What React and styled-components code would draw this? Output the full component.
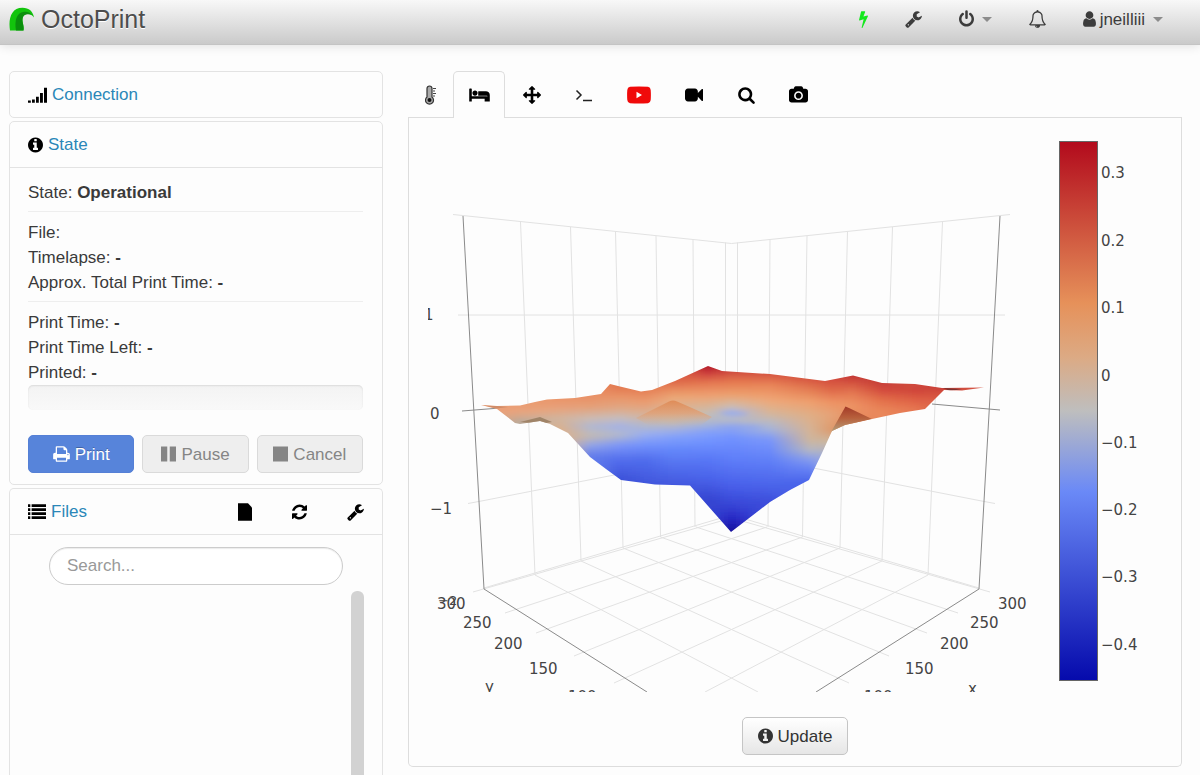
import React from "react";
import styled, { createGlobalStyle, css } from "styled-components";

const GlobalStyle = createGlobalStyle`
  *, *::before, *::after { box-sizing: border-box; }
  body {
    margin: 0;
    background: #fdfdfd;
    color: #3a3a3a;
    font-family: "Liberation Sans", Arial, sans-serif;
    font-size: 17px;
    line-height: 25px;
  }
  button, input { font: inherit; }
`;

/* ---------- icons ---------- */

const ICONS = {
  bolt: [448, 900, "M1333 566q18 20 7 44l-540 1157q-13 25-42 25-4 0-14-2-17-5-25.500-19t-4.500-30l197-808-406 101q-4 1-12 1-18 0-31-11-18-15-13-39l201-825q4-14 16-23t28-9h328q19 0 32 12.500t13 29.500q0 8-5 18l-171 463 396-98q8-2 12-2 19 0 34 15z"],
  wrench: [64, 1664, "M448 1472q0-26-19-45t-45-19-45 19-19 45 19 45 45 19 45-19 19-45zm644-420l-682 682q-37 37-90 37-52 0-91-37l-106-108q-38-36-38-90 0-53 38-91l681-681q39 98 114.5 173.500t173.500 114.500zm634-435q0 39-23 106-47 134-164.500 217.500t-258.500 83.500q-185 0-316.500-131.500t-131.500-316.500 131.500-316.500 316.500-131.500q58 0 121.500 16.500t107.500 46.500q16 11 16 28t-16 28l-293 169v224l193 107q5-3 79-48.500t135.500-81 70.500-35.500q15 0 23.500 10t8.500 25z"],
  power: [128, 1536, "M1664 896q0 156-61 298t-164 245-245 164-298 61-298-61-245-164-164-245-61-298q0-182 80.500-343t226.500-270q43-32 95.500-25t83.500 50q32 42 24.500 94.500t-49.500 84.500q-98 74-151.500 181t-53.500 228q0 104 40.500 198.500t109.500 163.500 163.500 109.500 198.500 40.500 198.500-40.500 163.500-109.500 109.500-163.500 40.500-198.500q0-121-53.500-228t-151.500-181q-42-32-49.500-84.500t24.500-94.500q31-43 84-50t95 25q146 109 226.500 270t80.500 343zm-640-768v640q0 52-38 90t-90 38-90-38-38-90v-640q0-52 38-90t90-38 90 38 38 90z"],
  bell: [64, 1664, "M912 1696q0-16-16-16-59 0-101.500-42.500t-42.500-101.500q0-16-16-16t-16 16q0 73 51.500 124.500t124.500 51.500q16 0 16-16zm-666-288h1300q-266-300-266-832 0-51-24-105t-69-103-121.500-80.500-169.500-31.500-169.500 31.500-121.500 80.500-69 103-24 105q0 532-266 832zm1482 0q0 52-38 90t-90 38h-448q0 106-75 181t-181 75-181-75-75-181h-448q-52 0-90-38t-38-90q50-42 91-88t85-119.500 74.500-158.500 50-206 19.500-260q0-152 117-282.500t307-158.500q-8-19-8-39 0-40 28-68t68-28 68 28 28 68q0 20-8 39 190 28 307 158.500t117 282.500q0 139 19.500 260t50 206 74.500 158.500 85 119.500 91 88z"],
  user: [256, 1280, "M1536 1399q0 109-62.500 187t-150.500 78h-854q-88 0-150.500-78t-62.500-187q0-85 8.500-160.500t31.500-152 58.500-131 94-89 134.500-34.500q131 128 313 128t313-128q76 0 134.500 34.500t94 89 58.500 131 31.500 152 8.500 160.500zm-256-887q0 159-112.500 271.500t-271.500 112.500-271.500-112.500-112.500-271.500 112.500-271.500 271.500-112.500 271.500 112.500 112.500 271.500z"],
  info: [128, 1536, "M1152 1376v-160q0-14-9-23t-23-9h-96v-512q0-14-9-23t-23-9h-320q-14 0-23 9t-9 23v160q0 14 9 23t23 9h96v320h-96q-14 0-23 9t-9 23v160q0 14 9 23t23 9h448q14 0 23-9t9-23zm-128-896v-160q0-14-9-23t-23-9h-192q-14 0-23 9t-9 23v160q0 14 9 23t23 9h192q14 0 23-9t9-23zm640 416q0 209-103 385.500t-279.500 279.500-385.500 103-385.500-103-279.500-279.500-103-385.500 103-385.500 279.500-279.500 385.500-103 385.500 103 279.500 279.500 103 385.500z"],
  print: [64, 1664, "M448 1536h896v-256h-896v256zm0-640h896v-384h-160q-40 0-68-28t-28-68v-160h-640v640zm1152 64q0-26-19-45t-45-19-45 19-19 45 19 45 45 19 45-19 19-45zm128 0v416q0 13-9.500 22.500t-22.500 9.500h-224v160q0 40-28 68t-68 28h-960q-40 0-68-28t-28-68v-160h-224q-13 0-22.500-9.500t-9.500-22.500v-416q0-79 56.500-135.500t135.500-56.500h64v-544q0-40 28-68t68-28h672q40 0 88 20t76 48l152 152q28 28 48 76t20 88v256h64q79 0 135.500 56.500t56.500 135.500z"],
  pause: [128, 1536, "M128 128h640v1536h-640zM1024 128h640v1536h-640z"],
  stop: [128, 1536, "M128 128h1536v1536h-1536z"],
  signal: [0, 1900, "M0 1440h280v230h-280zM400 1340h280v330h-280zM800 1080h280v590h-280zM1200 700h290v970h-290zM1600 160h300v1510h-300z"],
  list: [0, 1792, "M0 130h230v260h-230zM360 130h1432v260h-1432zM0 530h230v260h-230zM360 530h1432v260h-1432zM0 930h230v260h-230zM360 930h1432v260h-1432zM0 1330h230v260h-230zM360 1330h1432v260h-1432z"],
  file: [128, 1400, "M128 20h1000l400 430v1320h-1400z"],
  refresh: [128, 1536, "M1639 1056q0 5-1 7-64 268-268 434.500t-478 166.500q-146 0-282.500-55t-243.500-157l-129 129q-19 19-45 19t-45-19-19-45v-448q0-26 19-45t45-19h448q26 0 45 19t19 45-19 45l-137 137q71 66 161 102t187 36q134 0 250-65t186-179q11-17 53-117 8-23 30-23h192q13 0 22.500 9.500t9.500 22.500zm25-800v448q0 26-19 45t-45 19h-448q-26 0-45-19t-19-45 19-45l138-138q-148-137-349-137-134 0-250 65t-186 179q-11 17-53 117-8 23-30 23h-199q-13 0-22.500-9.500t-9.500-22.500v-7q65-268 270-434.500t480-166.500q146 0 284 55.500t245 156.500l130-129q19-19 45-19t45 19 19 45z"],
  bed: [0, 2048, "M256 1024h1472q26 0 45 19t19 45v448h-256v-256h-1280v256h-256v-1216q0-26 19-45t45-19h128q26 0 45 19t19 45v704zm576-320q0-106-75-181t-181-75-181 75-75 181 75 181 181 75 181-75 75-181zm1216 256v-64q0-159-112.500-271.500t-271.500-112.500h-704q-26 0-45 19t-19 45v384h1152zM1792 960h256v576h-256z"],
  arrows: [0, 1792, "M1792 896q0 26-19 45l-256 256q-19 19-45 19t-45-19-19-45v-128h-384v384h128q26 0 45 19t19 45-19 45l-256 256q-19 19-45 19t-45-19l-256-256q-19-19-19-45t19-45 45-19h128v-384h-384v128q0 26-19 45t-45 19-45-19l-256-256q-19-19-19-45t19-45l256-256q19-19 45-19t45 19 19 45v128h384v-384h-128q-26 0-45-19t-19-45 19-45l256-256q19-19 45-19t45 19l256 256q19 19 19 45t-19 45-45 19h-128v384h384v-128q0-26 19-45t45-19 45 19l256 256q19 19 19 45z"],
  video: [0, 1792, "M1792 352v1088q0 42-39 59-13 5-25 5-27 0-45-19l-403-403v166q0 119-84.500 203.500t-203.500 84.500h-704q-119 0-203.500-84.500t-84.500-203.500v-704q0-119 84.500-203.500t203.500-84.500h704q119 0 203.500 84.500t84.500 203.500v165l403-402q18-19 45-19 12 0 25 5 39 17 39 59z"],
  search: [64, 1664, "M1216 832q0-185-131.500-316.500t-316.500-131.500-316.500 131.500-131.500 316.500 131.500 316.500 316.500 131.500 316.500-131.500 131.500-316.500zm512 832q0 52-38 90t-90 38q-54 0-90-38l-343-342q-179 124-399 124-143 0-273.500-55.500t-225-150-150-225-55.500-273.500 55.500-273.500 150-225 225-150 273.500-55.500 273.500 55.500 225 150 150 225 55.500 273.500q0 220-124 399l343 343q37 37 37 90z"],
  camera: [0, 1920, "M960 672q119 0 203.500 84.500t84.500 203.500-84.500 203.500-203.500 84.500-203.500-84.500-84.500-203.500 84.500-203.500 203.500-84.500zm704-416q106 0 181 75t75 181v896q0 106-75 181t-181 75h-1408q-106 0-181-75t-75-181v-896q0-106 75-181t181-75h224l51-136q19-49 69.500-84.500t103.500-35.500h512q53 0 103.500 35.500t69.500 84.500l51 136h224zm-704 1152q185 0 316.500-131.500t131.500-316.500-131.500-316.500-316.500-131.500-316.500 131.500-131.500 316.500 131.500 316.500 316.500 131.500z"],
};

const IconSvg = styled.svg`
  display: block;
  flex: none;
  fill: currentColor;
`;

function Icon({ name }) {
  const [x, w, d] = ICONS[name];
  return (
    <IconSvg aria-hidden="true" viewBox={`${x} 0 ${w} 1792`} width={Math.round((w * 18) / 1792)} height="18">
      <path d={d} />
    </IconSvg>
  );
}

const Thermometer = () => (
  <IconSvg aria-hidden="true" viewBox="0 0 12 20" width="12" height="20">
    <path d="M2 3.500a2.500 2.500 0 0 1 5 0v8.500a4 4 0 1 1-5 0z" fill="#aaa" stroke="#333" strokeWidth="1.200" />
    <circle cx="4.500" cy="15" r="2" fill="#111" />
    <path d="M8 3.500h3M8 6h2M8 8.500h3M8 11h2" stroke="#444" strokeWidth="1.100" />
  </IconSvg>
);

const Terminal = () => (
  <IconSvg aria-hidden="true" viewBox="0 0 18 18" width="18" height="18">
    <path d="M1.500 4.500 6 9l-4.500 4.500M8 14.500h9" fill="none" stroke="#222" strokeWidth="1.500" />
  </IconSvg>
);

const Youtube = () => (
  <IconSvg aria-hidden="true" viewBox="0 0 24 18" width="24" height="18">
    <path d="M3 .8Q12 0 21 .8 23.500 1.200 23.700 4q.4 5 0 10-.2 2.800-2.700 3.200-9 .8-18 0Q.5 16.800.3 14-.1 9 .3 4 .5 1.200 3 .8z" fill="#f00a0a" />
    <path d="M9.500 5.800 15 9l-5.500 3.200z" fill="#fff" />
  </IconSvg>
);

const Logo = () => (
  <IconSvg aria-hidden="true" viewBox="0 0 26 24" width="26" height="24">
    <path d="M1 23.500C-.8 12 2 .8 13.500.8 20 .8 24 4.500 25 10.500 22 6 16 5 14 10c-1.800 4.500 1.500 8 .5 13.500z" fill="#12c40c" />
    <path d="M7 23.500C5.500 14 7 6 15 4.800c3-.4 6 .6 8.500 3.300-4-1.500-8-1.500-9.500 1.900-1.800 4.500 1.500 8 .5 13.500z" fill="#0a8f0c" />
  </IconSvg>
);

/* ---------- header ---------- */

const Header = styled.header`
  display: flex;
  align-items: center;
  justify-content: space-between;
  height: 45px;
  padding: 0 37px 6px 9px;
  background: linear-gradient(#f8f8f8, #cacaca);
  border-bottom: 1px solid #c4c4c4;
  box-shadow: 0 1px 10px rgba(0, 0, 0, 0.12);
`;

const Brand = styled.a`
  display: flex;
  align-items: center;
  gap: 6px;
  color: #4d4d4d;
  font-size: 25px;
  text-decoration: none;
  text-shadow: 0 1px 0 #fff;
`;

const Nav = styled.nav`
  display: flex;
  align-items: center;
  gap: 37px;
`;

const NavButton = styled.button`
  display: flex;
  align-items: center;
  gap: 4px;
  padding: 0;
  border: 0;
  background: none;
  color: ${(p) => p.$color || "#3c3c3c"};
`;

const Caret = styled.span`
  margin-left: 4px;
  border: 5px solid transparent;
  border-top-color: #8c8c8c;
  border-bottom: 0;
`;

/* ---------- layout ---------- */

const Page = styled.div`
  display: flex;
  flex-direction: column;
  min-height: 100vh;
`;

const Main = styled.main`
  flex: 1;
  display: grid;
  grid-template-columns: minmax(0, 374fr) minmax(0, 774fr);
  gap: 25px;
  padding: 26px 18px 0 9px;
`;

const Sidebar = styled.aside`
  display: flex;
  flex-direction: column;
  gap: 3px;
`;

const Panel = styled.section`
  border: 1px solid #e3e3e3;
  border-radius: 5px;
  ${(p) =>
    p.$grow &&
    css`
      flex: 1;
      display: flex;
      flex-direction: column;
      border-bottom: 0;
      border-radius: 5px 5px 0 0;
    `}
`;

const PanelHeading = styled.div`
  display: flex;
  align-items: center;
  gap: 5px;
  height: ${(p) => (p.$open ? 46 : 45)}px;
  padding: 0 18px;
  color: #000;
  border-bottom: ${(p) => (p.$open ? "1px solid #e3e3e3" : "0")};
`;

const PanelLink = styled.a`
  color: #2a87b8;
  text-decoration: none;
`;

const Tools = styled.div`
  display: flex;
  align-items: center;
  gap: 40px;
  margin-left: auto;
`;

const ToolButton = styled.button`
  padding: 0;
  border: 0;
  background: none;
  color: #000;
`;

const StateBody = styled.div`
  padding: 12px 19px 11px 18px;
`;

const Group = styled.div`
  & + & {
    margin-top: 6px;
    padding-top: 8px;
    border-top: 1px solid #eee;
  }
`;

const Progress = styled.div`
  height: 25px;
  margin-bottom: 25px;
  border-radius: 5px;
  background: linear-gradient(#f3f3f3, #f9f9f9);
  box-shadow: inset 0 1px 2px rgba(0, 0, 0, 0.1);
`;

const Actions = styled.div`
  display: grid;
  grid-template-columns: repeat(3, 1fr);
  gap: 8px;
`;

const Button = styled.button`
  display: inline-flex;
  align-items: center;
  justify-content: center;
  gap: 5px;
  height: 38px;
  padding: 0 15px;
  border: 1px solid #c5c5c5;
  border-radius: 5px;
  background: linear-gradient(#fff, #e6e6e6);
  color: #333;
  ${(p) =>
    p.$primary &&
    css`
      border-color: #5580d6;
      background: #5784da;
      color: #fff;
      text-shadow: 0 -1px 0 rgba(0, 0, 0, 0.25);
    `}
  &:disabled {
    border-color: #dadada;
    background: #eee;
    color: #858585;
  }
`;

const FilesBody = styled.div`
  flex: 1;
  display: flex;
  flex-direction: column;
  padding: 12px 18px 0 39px;
`;

const Search = styled.input`
  height: 38px;
  margin: 0 21px 6px 0;
  padding: 0 17px;
  border: 1px solid #ccc;
  border-radius: 19px;
  background: #fff;
  box-shadow: inset 0 1px 1px rgba(0, 0, 0, 0.08);
  &::placeholder { color: #999; opacity: 1; }
`;

const ScrollThumb = styled.div`
  flex: 1;
  align-self: flex-end;
  width: 13px;
  min-height: 60px;
  border-radius: 6px 6px 0 0;
  background: #d2d2d2;
`;

const Content = styled.div`
  display: flex;
  flex-direction: column;
  padding-bottom: 8px;
`;

const Tabs = styled.div`
  display: flex;
  height: 47px;
  box-shadow: inset 0 -1px 0 #ddd;
`;

const Tab = styled.button`
  display: flex;
  align-items: center;
  justify-content: center;
  width: ${(p) => p.$width}px;
  padding: 0;
  border: 1px solid transparent;
  border-bottom: 0;
  background: none;
  color: #000;
  ${(p) =>
    p.$active &&
    css`
      border-color: #ddd;
      border-radius: 5px 5px 0 0;
      background: #fdfdfd;
    `}
`;

const TabPane = styled.div`
  display: flex;
  flex-direction: column;
  align-items: center;
  padding-bottom: 11px;
  border: 1px solid #ddd;
  border-top: 0;
  border-radius: 0 0 5px 5px;
`;

const Chart = styled.svg`
  display: block;
  width: 100%;
  height: auto;
  margin-bottom: 25px;
  font-family: "DejaVu Sans", Verdana, sans-serif;
  font-size: 15px;
  fill: #444;
`;

/* ---------- bed mesh chart ---------- */

const OUTLINE =
  "M481 405 497 406 520 405.500 535 402 547 399.500 575 398 601 394 610 384 620 386.500 641 391.500 652 390 675 381 708 366 722 371 770 374 825 381 853 375.500 882 383 915 384 942 388 984 387.500 962 390.500 944 390 925 409 900 413 872 419 845 425 832 431 822 453 809 480 790 490 770 502 731 532 690 485.500 655 484.500 621 480 606 469 590 457 568 433 550 424 540 421 520 424 515 423 497 409z";

// Sampled surface colours: screen column, then [screen row, colour] pairs.
const COLUMNS = [
  [480, [[400, "eb9b72"], [412, "eba077"]]],
  [520, [[404, "ea9c70"], [412, "e9a57e"], [422, "b9ab9c"]]],
  [560, [[399, "ea9468"], [409, "e6a47e"], [419, "d0b5a0"], [430, "dbb08c"]]],
  [590, [[395, "e98f64"], [407, "e5a078"], [418, "cdbab0"], [427, "b0b7d2"], [436, "c5bab0"], [446, "8fa2e8"], [456, "617bea"]]],
  [620, [[386, "e2774e"], [397, "e99468"], [409, "dfaa88"], [418, "c6bcbd"], [427, "a3b2e6"], [435, "b3b9cc"], [445, "7c96f8"], [460, "526ded"], [480, "3b50d8"]]],
  [645, [[390, "e57f55"], [402, "ea9c70"], [414, "d8b196"], [424, "b8bac4"], [434, "9aaeef"], [445, "7392fc"], [460, "4f6cec"], [484, "4056dc"]]],
  [673, [[381, "dd6546"], [390, "e88d60"], [398, "eba878"], [406, "dfb08c"], [416, "cfb8a2"], [424, "bdb9bc"], [431, "9caee8"], [438, "7f9efc"], [450, "6487fa"], [466, "5370ee"], [485, "4257de"]]],
  [708, [[366, "b0152a"], [373, "cc3d3a"], [383, "e57851"], [396, "eea272"], [406, "d8b497"], [414, "c4bdb5"], [424, "a8b5d6"], [432, "83a0fb"], [442, "7092ff"], [458, "5a79f7"], [478, "4a63ea"], [500, "3444d0"]]],
  [732, [[370, "cc453c"], [382, "e5794f"], [395, "eda26f"], [405, "d2bba8"], [412, "a9b6e0"], [417, "b2b8d0"], [421, "b4b9c8"], [427, "8ea6f0"], [438, "7192ff"], [460, "5e7df8"], [485, "4960ea"], [505, "3745d6"], [520, "2523c0"], [532, "160c96"]]],
  [770, [[372, "d34d3d"], [385, "e98558"], [400, "efa777"], [413, "d6b699"], [423, "b6b9c6"], [430, "a2b1dc"], [440, "7996fb"], [460, "6080f8"], [485, "4b64ea"], [502, "3c4edb"]]],
  [810, [[378, "d5533e"], [390, "e47d53"], [402, "ee9f6e"], [415, "e0ae86"], [428, "d6b294"], [440, "cdb69e"], [450, "b4b6c2"], [460, "839af0"], [470, "6480f4"], [482, "4a65ea"]]],
  [832, [[378, "d2493c"], [390, "df6848"], [402, "ed9263"], [415, "e6a377"], [430, "dd9a6c"], [442, "cbb7a0"], [455, "a6afd0"]]],
  [853, [[374, "bf3033"], [382, "d2503e"], [392, "e37550"], [405, "ed9365"], [420, "e58a5c"]]],
  [882, [[382, "c53c36"], [390, "d34b3d"], [400, "e36f4a"], [412, "ea895c"], [420, "e78459"]]],
  [915, [[383, "d04c3d"], [390, "cf453a"], [400, "df6044"], [410, "e67852"]]],
  [942, [[386, "c53b37"], [392, "d34c3c"], [402, "dc6145"]]],
  [986, [[386, "d75b47"], [392, "d75b47"]]],
];

const rgb = (hex) => [0, 2, 4].map((i) => parseInt(hex.slice(i, i + 2), 16));
const mix = (a, b, t) => a.map((v, i) => v + (b[i] - v) * t);

function columnColor(stops, y) {
  if (y <= stops[0][0]) return rgb(stops[0][1]);
  for (let i = 1; i < stops.length; i++) {
    if (y <= stops[i][0]) {
      const [y0, c0] = stops[i - 1];
      const [y1, c1] = stops[i];
      return mix(rgb(c0), rgb(c1), (y - y0) / (y1 - y0));
    }
  }
  return rgb(stops[stops.length - 1][1]);
}

function surfaceCells() {
  const cells = [];
  const size = 4;
  for (let x = 476; x < 990; x += size) {
    const cx = Math.min(Math.max(x + 2, 481), 985);
    let k = 1;
    while (COLUMNS[k][0] < cx) k++;
    const [x0, s0] = COLUMNS[k - 1];
    const [x1, s1] = COLUMNS[k];
    const t = (cx - x0) / (x1 - x0);
    const top = Math.min(s0[0][0], s1[0][0]) - 12;
    const bottom = Math.max(s0[s0.length - 1][0], s1[s1.length - 1][0]) + 12;
    for (let y = Math.floor(top / size) * size; y < bottom; y += size) {
      const c = mix(columnColor(s0, y + 2), columnColor(s1, y + 2), t).map(Math.round);
      cells.push(<rect key={`${x}-${y}`} x={x} y={y} width={size + 1} height={size + 1} fill={`rgb(${c})`} />);
    }
  }
  return cells;
}

// The box is symmetric about its centre line, so one half describes both.
const HALF_GRID =
  "M453 214.500 731.500 243.500M458 315H731.500M468 503.500 484 500.500 731.500 452M473 592 731.500 518M484 588 731.500 515" +
  "M520.500 222 535 575M570.500 227 581 561M615.500 231.500 623 548M656 236 660.500 537M693 240 695 527M725.500 242.500V518" +
  "M505 613 767 527M536 633 802.500 537M574 656 840 548M614 683 882 561M705 692 928 575";
const HALF_AXES = "M463 216 473.500 405 484 589 647 692";

function HalfBox() {
  return (
    <g fill="none">
      <path d={HALF_GRID} stroke="#e2e2e2" />
      <path d={HALF_AXES} stroke="#8a8a8a" />
    </g>
  );
}

const SCALE = [["0.3", 178], ["0.2", 246], ["0.1", 313], ["0", 381], ["−0.1", 448], ["−0.2", 515], ["−0.3", 582], ["−0.4", 650]];
const AXIS_LABELS = [["−1", 430, 514], ["0", 430, 419], ["300", 437, 609], ["250", 463, 628], ["200", 494, 649], ["150", 529, 674], ["100", 568, 702], ["300", 998, 609], ["250", 970, 628], ["200", 940, 649], ["150", 905, 674], ["100", 864, 702], ["y", 485, 692], ["x", 968, 694]];

function MeshChart() {
  return (
    <Chart viewBox="409 118 772 574" role="img" aria-label="Bed mesh surface">
      <defs>
        <clipPath id="surface"><path d={OUTLINE} /></clipPath>
        <clipPath id="scene"><rect x="428" y="118" width="610" height="574" /></clipPath>
        <filter id="smooth" x="-5%" y="-5%" width="110%" height="110%"><feGaussianBlur stdDeviation="2.200" /></filter>
        <linearGradient id="peak" x1="0" y1="0" x2="0" y2="1">
          <stop offset="0" stopColor="#df8c58" />
          <stop offset=".5" stopColor="#e0a076" stopOpacity=".8" />
          <stop offset="1" stopColor="#cdb8a2" stopOpacity="0" />
        </linearGradient>
        <linearGradient id="fold" x1="0" y1="0" x2="0" y2="1">
          <stop offset="0" stopColor="#a33a28" />
          <stop offset=".45" stopColor="#b8603c" />
          <stop offset="1" stopColor="#b5a07c" />
        </linearGradient>
        <linearGradient id="scale" x1="0" y1="1" x2="0" y2="0">
          <stop offset="0" stopColor="#050aac" />
          <stop offset=".35" stopColor="#6a89f7" />
          <stop offset=".5" stopColor="#bebebe" />
          <stop offset=".6" stopColor="#dcaa84" />
          <stop offset=".7" stopColor="#e6915a" />
          <stop offset="1" stopColor="#b20a1c" />
        </linearGradient>
      </defs>
      <HalfBox />
      <g transform="translate(1463 0) scale(-1 1)"><HalfBox /></g>
      <path d="M462 411 500 408M932 404 1000 410" stroke="#8a8a8a" fill="none" />
      <g clipPath="url(#surface)">
        <g filter="url(#smooth)">
          {surfaceCells()}
          <path d="M718 413Q732 409 750 414 735 417 718 413z" fill="#8fa6f4" opacity=".7" />
          <path d="M712 426Q735 421 765 427 740 432 712 426z" fill="#8aa1f2" opacity=".5" />
        </g>
        <path d="M636 418Q656 408 669 401.500 673 399.500 677 401.500 690 407 712 417L700 426H650z" fill="url(#peak)" />
        <path d="M520 422 540 417 552 422 540 424z" fill="#a08468" />
        <path d="M845.500 406.500 849 408 872 419 845 426 831 432z" fill="url(#fold)" />
        <path d="M943 388 962 389 950 391z" fill="#7d3330" />
        <path d="M481 405 497 406 508 407 497 408.500z" fill="#d08c68" />
      </g>
      <g clipPath="url(#scene)">
        <text x="424" y="320">1</text>
        <text x="438" y="605" fontSize="13">−2</text>
        {AXIS_LABELS.map(([label, x, y]) => (
          <text key={label + x} x={x} y={y}>{label}</text>
        ))}
      </g>
      <rect x="1059.500" y="141.500" width="38" height="539" fill="url(#scale)" stroke="#666" />
      {SCALE.map(([label, y]) => (
        <text key={label} x="1101" y={y}>{label}</text>
      ))}
    </Chart>
  );
}

/* ---------- app ---------- */

const TABS = [
  ["Temperature", 45, <Thermometer />],
  ["Bed Visualizer", 52, <Icon name="bed" />],
  ["Control", 54, <Icon name="arrows" />],
  ["Terminal", 50, <Terminal />],
  ["YouTube", 60, <Youtube />],
  ["Webcam", 50, <Icon name="video" />],
  ["Search", 54, <Icon name="search" />],
  ["Timelapse", 50, <Icon name="camera" />],
];

export default function App() {
  return (
    <Page>
      <GlobalStyle />
      <Header>
        <Brand href="#"><Logo />OctoPrint</Brand>
        <Nav>
          <NavButton aria-label="Power supply" $color="#14e81e"><Icon name="bolt" /></NavButton>
          <NavButton aria-label="Settings"><Icon name="wrench" /></NavButton>
          <NavButton aria-label="System"><Icon name="power" /><Caret /></NavButton>
          <NavButton aria-label="Notifications"><Icon name="bell" /></NavButton>
          <NavButton><Icon name="user" />jneilliii<Caret /></NavButton>
        </Nav>
      </Header>
      <Main>
        <Sidebar>
          <Panel>
            <PanelHeading><Icon name="signal" /><PanelLink href="#">Connection</PanelLink></PanelHeading>
          </Panel>
          <Panel>
            <PanelHeading $open><Icon name="info" /><PanelLink href="#">State</PanelLink></PanelHeading>
            <StateBody>
              <Group>
                <div>State: <strong>Operational</strong></div>
              </Group>
              <Group>
                <div>File:</div>
                <div>Timelapse: <strong>-</strong></div>
                <div>Approx. Total Print Time: <strong>-</strong></div>
              </Group>
              <Group>
                <div>Print Time: <strong>-</strong></div>
                <div>Print Time Left: <strong>-</strong></div>
                <div>Printed: <strong>-</strong></div>
              </Group>
              <Progress role="progressbar" aria-label="Print progress" aria-valuenow={0} />
              <Actions>
                <Button $primary><Icon name="print" />Print</Button>
                <Button disabled><Icon name="pause" />Pause</Button>
                <Button disabled><Icon name="stop" />Cancel</Button>
              </Actions>
            </StateBody>
          </Panel>
          <Panel $grow>
            <PanelHeading $open>
              <Icon name="list" /><PanelLink href="#">Files</PanelLink>
              <Tools>
                <ToolButton aria-label="New file"><Icon name="file" /></ToolButton>
                <ToolButton aria-label="Refresh"><Icon name="refresh" /></ToolButton>
                <ToolButton aria-label="File settings"><Icon name="wrench" /></ToolButton>
              </Tools>
            </PanelHeading>
            <FilesBody>
              <Search type="text" aria-label="Search files" placeholder="Search..." />
              <ScrollThumb />
            </FilesBody>
          </Panel>
        </Sidebar>
        <Content>
          <Tabs role="tablist">
            {TABS.map(([label, width, icon]) => (
              <Tab key={label} role="tab" aria-label={label} aria-selected={label === "Bed Visualizer"} $width={width} $active={label === "Bed Visualizer"}>
                {icon}
              </Tab>
            ))}
          </Tabs>
          <TabPane>
            <MeshChart />
            <Button><Icon name="info" />Update</Button>
          </TabPane>
        </Content>
      </Main>
    </Page>
  );
}
